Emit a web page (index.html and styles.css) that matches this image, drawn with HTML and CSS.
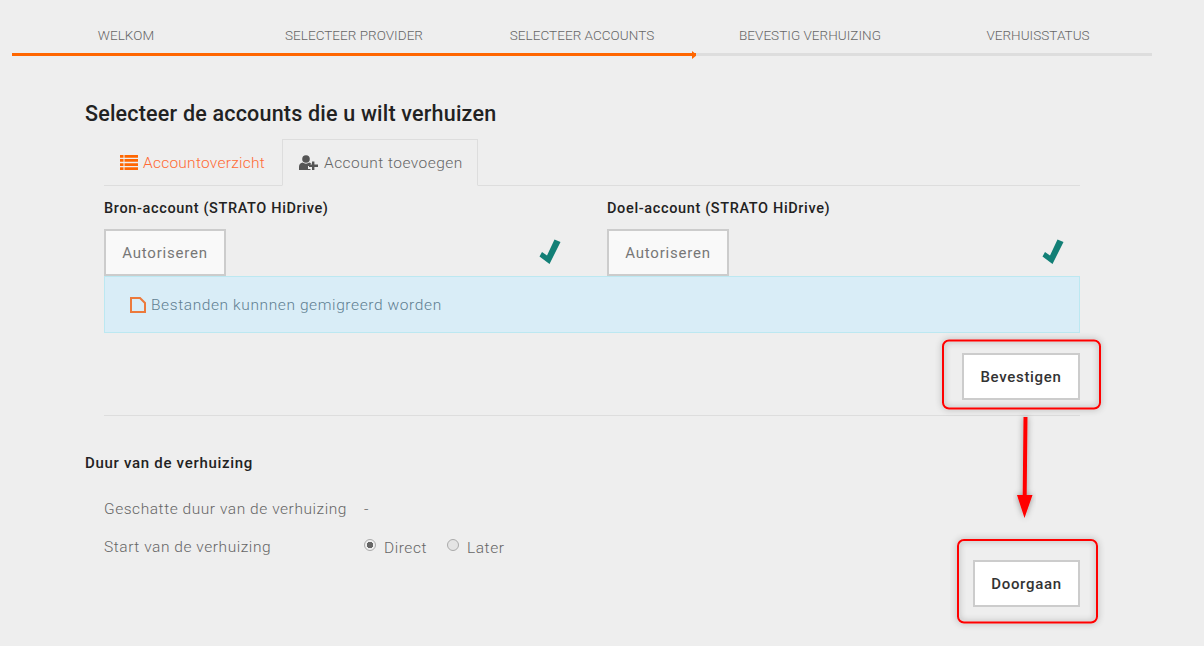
FILE: index.html
```html
<!DOCTYPE html>
<html lang="nl">
<head>
<meta charset="utf-8">
<title>Selecteer accounts</title>
<link rel="stylesheet" href="styles.css">
</head>
<body>
<div class="page">
  <nav class="stepper">
    <div class="step done">WELKOM</div>
    <div class="step done">SELECTEER PROVIDER</div>
    <div class="step done current">SELECTEER ACCOUNTS</div>
    <div class="step">BEVESTIG VERHUIZING</div>
    <div class="step">VERHUISSTATUS</div>
  </nav>
  <main class="content">
    <h1 class="title">Selecteer de accounts die u wilt verhuizen</h1>
    <div class="indented">
      <ul class="tabs">
        <li class="tab link">
          <svg class="tab-icon" viewBox="0 0 18 15" width="18" height="15"><path fill="#f60" d="M0 0h3.500v2.700H0zM4.500 0H18v2.700H4.500zM0 4.100h3.500v2.700H0zM4.500 4.100H18v2.700H4.500zM0 8.200h3.500v2.700H0zM4.500 8.200H18v2.700H4.500zM0 12.300h3.500V15H0zM4.500 12.300H18V15H4.500z"/></svg>
          Accountoverzicht
        </li>
        <li class="tab active">
          <svg class="tab-icon" viewBox="0 0 20 15" width="20" height="15"><circle cx="7" cy="4" r="3.800" fill="#555"/><path fill="#555" d="M0 15v-3.200C0 9.400 1.800 7.800 3.600 7.600 5.600 9 8.400 9 10.200 7.600c1 .1 1.800.5 2.500 1.200H11.500v2.200H9v3h2.500V15z"/><path fill="#555" d="M13 6.500h2.400v3H19v2.400h-3.600v3H13v-3H10V9.500h3z"/></svg>
          Account toevoegen
        </li>
      </ul>
      <div class="accounts">
        <section class="account">
          <h2 class="account-title">Bron-account (STRATO HiDrive)</h2>
          <div class="account-row">
            <button class="btn btn-muted">Autoriseren</button>
            <svg class="check" viewBox="0 0 22 25" width="22" height="25"><path fill="#127f76" d="M15.500.5 21.500 3 10.500 25 .5 17.500 3 13 8 16.500z"/></svg>
          </div>
        </section>
        <section class="account">
          <h2 class="account-title">Doel-account (STRATO HiDrive)</h2>
          <div class="account-row">
            <button class="btn btn-muted">Autoriseren</button>
            <svg class="check" viewBox="0 0 22 25" width="22" height="25"><path fill="#127f76" d="M15.500.5 21.500 3 10.500 25 .5 17.500 3 13 8 16.500z"/></svg>
          </div>
        </section>
      </div>
      <div class="alert">
        <svg class="file-icon" viewBox="0 0 16 16" width="16" height="16"><path fill="none" stroke="#ec7a3c" stroke-width="2" d="M1 1h9l5 5v9H1z"/></svg>
        Bestanden kunnnen gemigreerd worden
      </div>
      <div class="confirm-row">
        <button class="btn">Bevestigen</button>
      </div>
      <hr class="divider">
    </div>
    <h3 class="section-title">Duur van de verhuizing</h3>
    <div class="indented details">
      <div class="detail-row">
        <span class="detail-label">Geschatte duur van de verhuizing</span>
        <span>-</span>
      </div>
      <div class="detail-row">
        <span class="detail-label">Start van de verhuizing</span>
        <span class="radio-group">
          <label class="radio"><span class="radio-dot checked"></span>Direct</label>
          <label class="radio"><span class="radio-dot"></span>Later</label>
        </span>
      </div>
    </div>
    <div class="next-row">
      <button class="btn">Doorgaan</button>
    </div>
  </main>
  <svg class="annotations" viewBox="0 0 1204 646" width="1204" height="646">
    <defs>
      <filter id="shade" x="-20%" y="-20%" width="140%" height="140%">
        <feDropShadow dx="0" dy="0" stdDeviation="3" flood-color="#000" flood-opacity=".4"/>
      </filter>
    </defs>
    <g fill="none" stroke="#f00" stroke-width="2" filter="url(#shade)">
      <rect x="943" y="340.500" width="157" height="68" rx="6"/>
      <rect x="958" y="540" width="139" height="82.500" rx="6"/>
    </g>
    <g filter="url(#shade)">
      <path fill="#f00" d="M1023.500 417h4l-.8 78h5.800l-8 23-7.500-23h5.700z"/>
    </g>
  </svg>
</div>
</body>
</html>
```
FILE: styles.css
```css
* { box-sizing: border-box; }
html, body { margin: 0; padding: 0; }
body {
  background: #eee;
  color: #777;
  font-family: "Roboto", "Liberation Sans", sans-serif;
  font-size: 16px;
}
.page {
  position: relative;
  width: 1204px;
  height: 646px;
  overflow: hidden;
}
.stepper {
  display: grid;
  grid-template-columns: repeat(5, 228px);
  margin-left: 12px;
  padding-top: 24px;
}
.step {
  position: relative;
  height: 32px;
  border-bottom: 3px solid #ddd;
  text-align: center;
  font-size: 13.500px;
  font-weight: 300;
  line-height: 22px;
  letter-spacing: .04px;
  color: #666;
}
.step.done { border-bottom-color: #f60; }
.step.current::after {
  content: "";
  position: absolute;
  right: -1px;
  bottom: -6px;
  border-left: 5px solid #f60;
  border-top: 4.500px solid transparent;
  border-bottom: 4.500px solid transparent;
}
.content {
  padding: 0 124px 0 85px;
}
.title {
  margin: 43px 0 0;
  font-size: 21.500px;
  line-height: 30px;
  font-weight: 500;
  letter-spacing: .2px;
  color: #222;
}
.indented { margin-left: 19px; }
.tabs {
  display: flex;
  list-style: none;
  margin: 10px 0 0;
  padding: 0;
  height: 47px;
  border-bottom: 1px solid #ddd;
}
.tab {
  display: flex;
  align-items: center;
  gap: 5px;
  height: 47px;
  font-weight: 300;
  font-size: 15.500px;
}
.tab.link {
  width: 178px;
  padding-left: 16px;
  letter-spacing: .25px;
  color: #ff6b35;
}
.tab.active {
  width: 196px;
  padding-left: 16px;
  letter-spacing: .47px;
  color: #666;
  background: #eee;
  border: 1px solid #ddd;
  border-bottom-color: #eee;
}
.tab-icon { flex: none; }
.accounts {
  display: grid;
  grid-template-columns: 457px 457px;
  column-gap: 46px;
}
.account-title {
  margin: 13px 0 10px;
  font-size: 14.500px;
  line-height: 20px;
  font-weight: 500;
  letter-spacing: .64px;
  color: #222;
}
.account-row {
  display: flex;
  justify-content: space-between;
  align-items: center;
}
.check { margin-bottom: 2px; }
.btn {
  height: 47px;
  padding: 2px 10px 0;
  background: #fff;
  border: 2px solid #ccc;
  font: 500 15px/1 "Roboto", "Liberation Sans", sans-serif;
  letter-spacing: .7px;
  color: #333;
}
.btn-muted {
  width: 122px;
  background: #f9f9f9;
  color: #777;
  font-weight: 400;
  letter-spacing: .8px;
}
.alert {
  display: flex;
  align-items: center;
  gap: 5px;
  height: 57px;
  padding-left: 25px;
  background: #d9edf7;
  border: 1px solid #bce8f1;
  color: #5f7f92;
  font-weight: 300;
  font-size: 15.500px;
  letter-spacing: .6px;
}
.confirm-row {
  display: flex;
  justify-content: flex-end;
  padding-top: 20px;
}
.confirm-row .btn { width: 118px; }
.divider {
  margin: 15px 0 0;
  border: 0;
  border-top: 1px solid #ddd;
}
.section-title {
  margin: 37px 0 0;
  font-size: 15px;
  line-height: 20px;
  font-weight: 500;
  letter-spacing: .7px;
  color: #222;
}
.details { margin-top: 26px; }
.detail-row {
  display: flex;
  height: 38px;
  font-weight: 300;
  font-size: 15.500px;
  line-height: 20px;
  letter-spacing: .55px;
  color: #666;
}
.detail-label { width: 260px; }
.radio-group { display: flex; gap: 20px; }
.radio {
  display: flex;
  align-items: center;
  gap: 8px;
  height: 22px;
}
.radio-dot {
  width: 12px;
  height: 12px;
  border-radius: 50%;
  background: #e4e4e4;
  border: 1px solid #aaa;
  margin-top: -7px;
}
.radio-dot.checked {
  background: radial-gradient(circle, #666 0 3px, #eee 3.500px);
}
.next-row {
  display: flex;
  justify-content: flex-end;
  margin-top: -15px;
}
.next-row .btn { width: 107px; }
.annotations {
  position: absolute;
  left: 0;
  top: 0;
  pointer-events: none;
}
```
